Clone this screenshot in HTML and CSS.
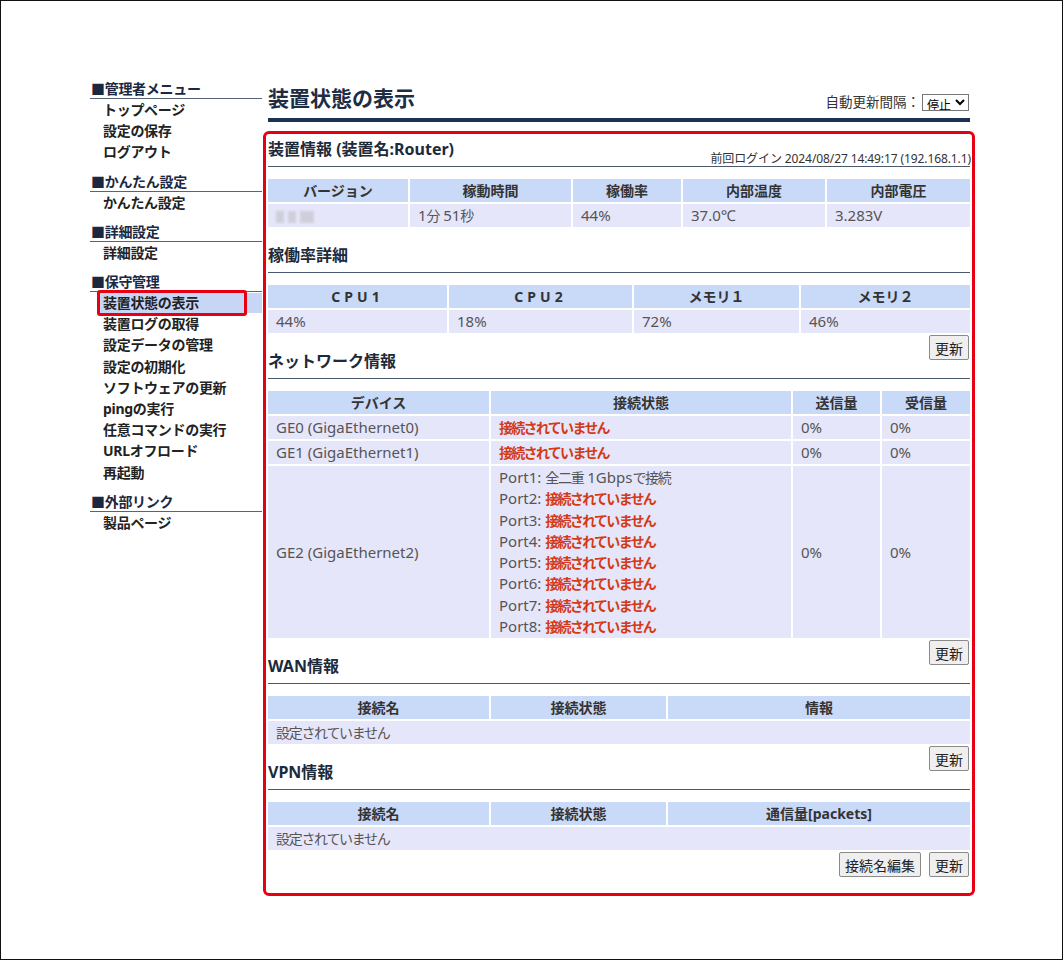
FILE: index.html
```html
<!DOCTYPE html>
<html lang="ja">
<head>
<meta charset="utf-8">
<title>装置状態の表示</title>
<link rel="stylesheet" href="styles.css">
</head>
<body>
<div class="frame">
  <nav class="sidebar">
    <div class="menu-group">
      <div class="menu-head">■管理者メニュー</div>
      <a class="menu-item">トップページ</a>
      <a class="menu-item">設定の保存</a>
      <a class="menu-item">ログアウト</a>
    </div>
    <div class="menu-group">
      <div class="menu-head">■かんたん設定</div>
      <a class="menu-item">かんたん設定</a>
    </div>
    <div class="menu-group">
      <div class="menu-head">■詳細設定</div>
      <a class="menu-item">詳細設定</a>
    </div>
    <div class="menu-group">
      <div class="menu-head">■保守管理</div>
      <a class="menu-item active">装置状態の表示</a>
      <a class="menu-item">装置ログの取得</a>
      <a class="menu-item">設定データの管理</a>
      <a class="menu-item">設定の初期化</a>
      <a class="menu-item">ソフトウェアの更新</a>
      <a class="menu-item">pingの実行</a>
      <a class="menu-item">任意コマンドの実行</a>
      <a class="menu-item">URLオフロード</a>
      <a class="menu-item">再起動</a>
    </div>
    <div class="menu-group">
      <div class="menu-head">■外部リンク</div>
      <a class="menu-item">製品ページ</a>
    </div>
  </nav>

  <main class="main">
    <div class="title-row">
      <h1 class="page-title">装置状態の表示</h1>
      <div class="auto-refresh">自動更新間隔：<select class="refresh-select"><option>停止</option></select></div>
    </div>

    <div class="highlight-box">
      <div class="section-head first">
        <h2 class="section-title">装置情報 (装置名:Router)</h2>
        <span class="last-login">前回ログイン 2024/08/27 14:49:17 (192.168.1.1)</span>
      </div>
      <table class="grid">
        <tr>
          <th class="w140">バージョン</th>
          <th class="w161">稼動時間</th>
          <th class="w108">稼働率</th>
          <th class="w142">内部温度</th>
          <th>内部電圧</th>
        </tr>
        <tr>
          <td><span class="blur"><i class="b1"></i><i class="b2"></i><i class="b3"></i></span></td>
          <td>1<span class="ja">分</span> 51<span class="ja">秒</span></td>
          <td>44%</td>
          <td>37.0℃</td>
          <td>3.283V</td>
        </tr>
      </table>

      <div class="section-head">
        <h2 class="section-title">稼働率詳細</h2>
      </div>
      <table class="grid">
        <tr>
          <th class="w179 spaced">CPU1</th>
          <th class="w182 spaced">CPU2</th>
          <th class="w164">メモリ１</th>
          <th>メモリ２</th>
        </tr>
        <tr>
          <td>44%</td>
          <td>18%</td>
          <td>72%</td>
          <td>46%</td>
        </tr>
      </table>
      <div class="float-btns"><button class="btn">更新</button></div>

      <div class="section-head">
        <h2 class="section-title">ネットワーク情報</h2>
      </div>
      <table class="grid">
        <tr>
          <th class="w220">デバイス</th>
          <th class="w299">接続状態</th>
          <th class="w86">送信量</th>
          <th>受信量</th>
        </tr>
        <tr>
          <td>GE0 (GigaEthernet0)</td>
          <td><span class="ng">接続されていません</span></td>
          <td>0%</td>
          <td>0%</td>
        </tr>
        <tr>
          <td>GE1 (GigaEthernet1)</td>
          <td><span class="ng">接続されていません</span></td>
          <td>0%</td>
          <td>0%</td>
        </tr>
        <tr>
          <td>GE2 (GigaEthernet2)</td>
          <td class="ports">
            <div class="port">Port1: <span class="ja">全二重</span> 1Gbps<span class="ja">で接続</span></div>
            <div class="port">Port2: <span class="ng">接続されていません</span></div>
            <div class="port">Port3: <span class="ng">接続されていません</span></div>
            <div class="port">Port4: <span class="ng">接続されていません</span></div>
            <div class="port">Port5: <span class="ng">接続されていません</span></div>
            <div class="port">Port6: <span class="ng">接続されていません</span></div>
            <div class="port">Port7: <span class="ng">接続されていません</span></div>
            <div class="port">Port8: <span class="ng">接続されていません</span></div>
          </td>
          <td>0%</td>
          <td>0%</td>
        </tr>
      </table>
      <div class="float-btns"><button class="btn">更新</button></div>

      <div class="section-head">
        <h2 class="section-title">WAN情報</h2>
      </div>
      <table class="grid">
        <tr>
          <th class="w220">接続名</th>
          <th class="w174">接続状態</th>
          <th>情報</th>
        </tr>
        <tr>
          <td colspan="3"><span class="ja">設定されていません</span></td>
        </tr>
      </table>
      <div class="float-btns"><button class="btn">更新</button></div>

      <div class="section-head">
        <h2 class="section-title">VPN情報</h2>
      </div>
      <table class="grid">
        <tr>
          <th class="w220">接続名</th>
          <th class="w174">接続状態</th>
          <th>通信量[packets]</th>
        </tr>
        <tr>
          <td colspan="3"><span class="ja">設定されていません</span></td>
        </tr>
      </table>
      <div class="end-btns"><button class="btn">接続名編集</button><button class="btn">更新</button></div>
    </div>
  </main>
</div>
</body>
</html>
```

FILE: styles.css
```css
*, *::before, *::after { box-sizing: border-box; }
html, body { margin: 0; padding: 0; background: #fff; }
body {
  font-family: "Noto Sans", "Noto Sans CJK JP", sans-serif;
  font-size: 14px;
  color: #333;
}

.frame {
  width: 1063px;
  height: 960px;
  border: 1px solid #111;
  display: flex;
  align-items: flex-start;
  padding: 79px 0 0 89px;
  gap: 6px;
}

/* ---------- sidebar ---------- */
.sidebar {
  width: 172px;
  flex: none;
}
.menu-group { margin-bottom: 10px; }
.menu-head {
  font-weight: bold;
  font-size: 14px;
  line-height: 18px;
  color: #1b2840;
  border-bottom: 1px solid #56657a;
  padding-left: 1px;
  letter-spacing: -0.3px;
}
.menu-item {
  display: block;
  position: relative;
  margin-top: 1px;
  margin-left: 9px;
  padding-left: 4px;
  font-weight: bold;
  line-height: 20.2px;
  color: #222;
  letter-spacing: -0.3px;
}
.menu-item.active { background: #c8d6f6; }
.menu-item.active::after {
  content: "";
  position: absolute;
  left: -2px;
  top: -3px;
  width: 150px;
  height: 26px;
  border: 3px solid #e60012;
  border-radius: 3px;
}

/* ---------- main ---------- */
.main {
  width: 702px;
  flex: none;
}
.title-row {
  display: flex;
  justify-content: space-between;
  align-items: flex-end;
  padding: 4px 0 6px;
  border-bottom: 4px solid #1b3350;
}
.page-title {
  margin: 0;
  font-size: 21px;
  line-height: 28px;
  font-weight: bold;
  color: #1c2d44;
}
.auto-refresh {
  font-size: 13.5px;
  line-height: 17px;
  color: #333;
  display: flex;
  align-items: center;
  margin-bottom: 1px;
}
.refresh-select {
  margin-left: 2px;
  height: 17px;
  font-size: 12px;
  padding: 0;
  border: 1px solid #767676;
  background: #fff;
  font-family: "Noto Sans CJK JP", sans-serif;
  margin-right: 1px;
}

.highlight-box {
  margin: 9px -5px 0;
  border: 3px solid #e60012;
  border-radius: 6px;
  padding: 0 0 16px;
}

.section-head {
  margin: 0 2px;
  padding: 15px 0 6px;
  border-bottom: 1px solid #4a5a6c;
}
.section-head.first {
  padding-top: 4px;
  display: flex;
  justify-content: space-between;
  align-items: flex-end;
}
.section-title {
  margin: 0;
  font-size: 16px;
  line-height: 22px;
  font-weight: bold;
  color: #1c2a3a;
}
.last-login {
  font-size: 12px;
  line-height: 16px;
  color: #333;
  margin-right: -1px;
  margin-bottom: -7px;
  letter-spacing: -0.1px;
}

/* tables */
.grid {
  width: 100%;
  margin-top: 10px;
  border-collapse: separate;
  border-spacing: 2px;
  table-layout: fixed;
}
.grid th, .grid td {
  padding: 1px 8px;
  line-height: 21px;
  text-align: left;
  vertical-align: middle;
}
.grid th {
  font-size: 14px;
  background: #c9d9f8;
  color: #333;
  font-weight: bold;
  text-align: center;
}
.grid td {
  font-size: 15px;
  background: #e6e6fa;
  color: #555;
}
.grid th.spaced { letter-spacing: 4px; }
.grid td.ports { padding-top: 1px; padding-bottom: 1px; }
.port { line-height: 21.3px; }

.ja { font-size: 14px; letter-spacing: -1.3px; }
.ng { font-size: 14px; color: #d33a16; font-weight: bold; letter-spacing: -1.7px; }

.w140 { width: 140px; }
.w161 { width: 161px; }
.w108 { width: 108px; }
.w142 { width: 142px; }
.w179 { width: 179px; }
.w182 { width: 183px; }
.w164 { width: 165px; }
.w220 { width: 221px; }
.w299 { width: 300px; }
.w86 { width: 87px; }
.w174 { width: 175px; }

.blur { display: inline-flex; gap: 4px; vertical-align: middle; filter: blur(1.2px); }
.blur i { display: block; height: 12px; background: #cfcfdc; }
.blur .b1 { width: 8px; }
.blur .b2 { width: 8px; }
.blur .b3 { width: 14px; }

/* buttons */
.float-btns {
  float: right;
  margin-right: 3px;
}
.end-btns {
  display: flex;
  justify-content: flex-end;
  gap: 8px;
  margin-right: 3px;
}
.btn {
  height: 25px;
  padding: 0 5px;
  font-family: "Noto Sans CJK JP", sans-serif;
  font-size: 14px;
  color: #222;
  background: #efefef;
  border: 1px solid #8a8a8a;
  border-radius: 2px;
}
```
